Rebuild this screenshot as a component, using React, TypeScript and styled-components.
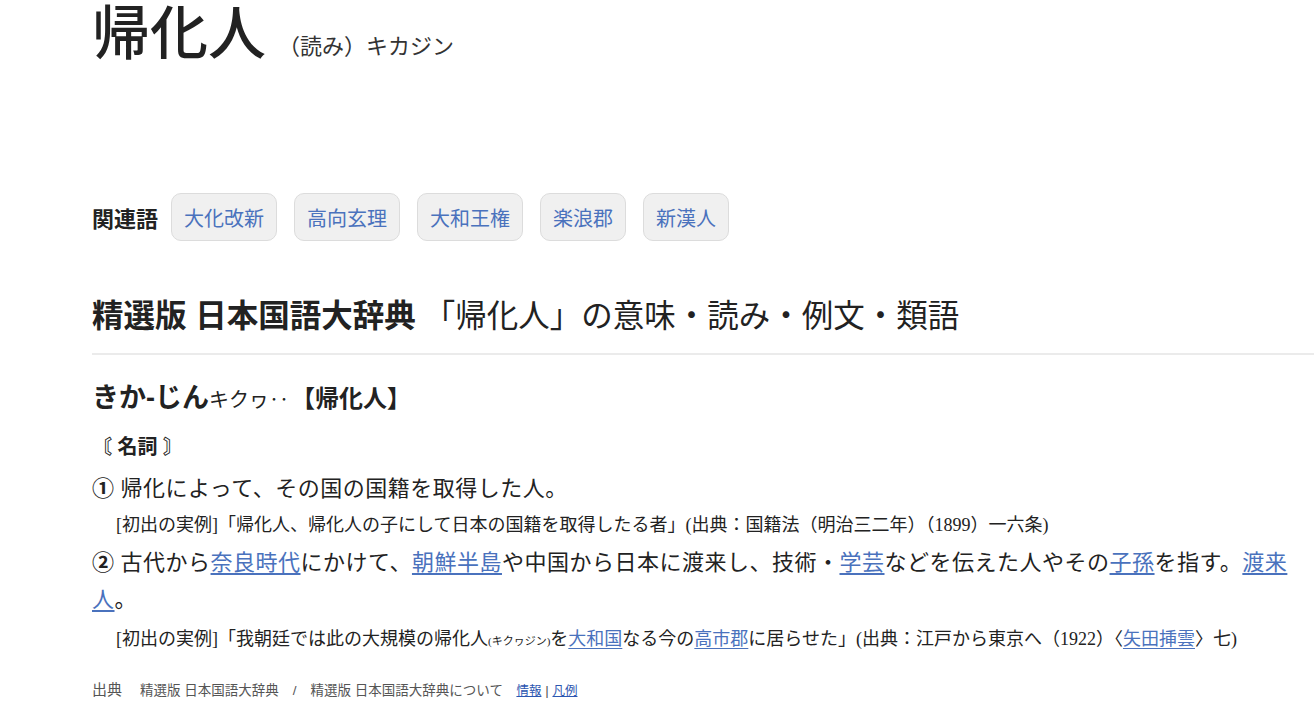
import styled, { createGlobalStyle } from "styled-components";

const GlobalStyle = createGlobalStyle`
  body {
    margin: 0;
    background: #ffffff;
    color: #222;
    font-family: "Liberation Sans", "Noto Sans CJK JP", sans-serif;
  }
`;

const Page = styled.div`
  padding-left: 92px;
  width: 1222px;
`;

const TitleRow = styled.div`
  display: flex;
  align-items: baseline;
  gap: 12px;
  height: 70px;
`;

const Title = styled.h1`
  margin: 0;
  font-family: "Liberation Serif", "Noto Sans CJK JP", serif;
  font-size: 58px;
  font-weight: 500;
  line-height: 70px;
  color: #222;
`;

const Reading = styled.span`
  font-family: "Liberation Serif", "Noto Sans CJK JP", serif;
  font-size: 22px;
  color: #333;
`;

const RelatedRow = styled.div`
  display: flex;
  align-items: center;
  margin-top: 123px;
  height: 48px;
`;

const RelatedLabel = styled.span`
  font-size: 22px;
  font-weight: 700;
  color: #222;
  margin-right: 13px;
`;

const Tags = styled.div`
  display: flex;
  gap: 17px;
`;

const Tag = styled.a`
  display: flex;
  align-items: center;
  height: 46px;
  padding: 0 12px;
  border: 1px solid #dcdcdc;
  border-radius: 10px;
  background: #f0f0f0;
  color: #4a72bd;
  font-size: 20px;
  text-decoration: none;
`;

const SectionHead = styled.h2`
  margin: 53px 0 0;
  padding-bottom: 15px;
  border-bottom: 2px solid #ebebeb;
  font-size: 31.5px;
  line-height: 44px;
  font-weight: 400;
  color: #222;
`;

const Strong = styled.b`
  font-weight: 700;
  margin-right: 8px;
`;

const EntryHead = styled.div`
  margin-top: 21px;
  display: flex;
  align-items: baseline;
  height: 40px;
`;

const Kana = styled.span`
  font-size: 27px;
  font-weight: 700;
`;

const OldKana = styled.span`
  font-family: "Liberation Serif", "Noto Sans CJK JP", serif;
  font-size: 20px;
  margin-right: 2px;
`;

const Headword = styled.span`
  font-size: 24px;
  font-weight: 700;
`;

const Pos = styled.div`
  margin-top: 16px;
  font-size: 20px;
  font-weight: 700;
  line-height: 30px;
`;

const Sense = styled.p<{ $gap?: number }>`
  margin: ${(p) => p.$gap ?? 0}px 0 0;
  padding-right: 12px;
  font-family: "Liberation Serif", "Noto Sans CJK JP", serif;
  font-size: 22px;
  letter-spacing: 0.5px;
  line-height: 37px;
  color: #222;
`;

const Num = styled.b`
  font-family: "Liberation Sans", "Noto Sans CJK JP", sans-serif;
  font-weight: 700;
  margin-right: 6px;
`;

const Example = styled.p<{ $gap?: number }>`
  margin: ${(p) => p.$gap ?? 0}px 0 0;
  padding-left: 24px;
  font-family: "Liberation Serif", "Noto Sans CJK JP", serif;
  font-size: 18px;
  line-height: 37px;
  color: #222;
`;

const Ruby = styled.span`
  font-size: 11px;
`;

const Link = styled.a`
  color: #4a72bd;
  text-decoration: underline;
  text-underline-offset: 3px;
`;

const Footer = styled.div`
  margin-top: 18px;
  display: flex;
  align-items: baseline;
  gap: 14px;
  font-size: 13.5px;
  color: #555;
`;

const FooterLabel = styled.span`
  font-size: 15px;
  color: #555;
  margin-right: 4px;
`;

const FooterLink = styled.a`
  color: #2c56b0;
  text-decoration: underline;
  font-size: 12.5px;
`;

const related = ["大化改新", "高向玄理", "大和王権", "楽浪郡", "新漢人"];

export default function App() {
  return (
    <>
      <GlobalStyle />
      <Page>
        <TitleRow>
          <Title>帰化人</Title>
          <Reading>（読み）キカジン</Reading>
        </TitleRow>

        <RelatedRow>
          <RelatedLabel>関連語</RelatedLabel>
          <Tags>
            {related.map((w) => (
              <Tag key={w} href="#">
                {w}
              </Tag>
            ))}
          </Tags>
        </RelatedRow>

        <SectionHead>
          <Strong>精選版 日本国語大辞典</Strong>「帰化人」の意味・読み・例文・類語
        </SectionHead>

        <EntryHead>
          <Kana>きか‐じん</Kana>
          <OldKana>キクヮ‥</OldKana>
          <Headword>【帰化人】</Headword>
        </EntryHead>

        <Pos>〘 名詞 〙</Pos>

        <Sense $gap={8}>
          <Num>①</Num>帰化によって、その国の国籍を取得した人。
        </Sense>
        <Example>
          [初出の実例]「帰化人、帰化人の子にして日本の国籍を取得したる者」(出典：国籍法（明治三二年）（1899）一六条)
        </Example>

        <Sense>
          <Num>②</Num>古代から<Link href="#">奈良時代</Link>にかけて、
          <Link href="#">朝鮮半島</Link>や中国から日本に渡来し、技術・
          <Link href="#">学芸</Link>などを伝えた人やその<Link href="#">子孫</Link>
          を指す。<Link href="#">渡来人</Link>。
        </Sense>
        <Example $gap={3}>
          [初出の実例]「我朝廷では此の大規模の帰化人<Ruby>(キクヮジン)</Ruby>を
          <Link href="#">大和国</Link>なる今の<Link href="#">高市郡</Link>
          に居らせた」(出典：江戸から東京へ（1922）〈<Link href="#">矢田挿雲</Link>〉七)
        </Example>

        <Footer>
          <FooterLabel>出典</FooterLabel>
          <span>精選版 日本国語大辞典</span>
          <span>/</span>
          <span>
            精選版 日本国語大辞典について　<FooterLink href="#">情報</FooterLink> |{" "}
            <FooterLink href="#">凡例</FooterLink>
          </span>
        </Footer>
      </Page>
    </>
  );
}
